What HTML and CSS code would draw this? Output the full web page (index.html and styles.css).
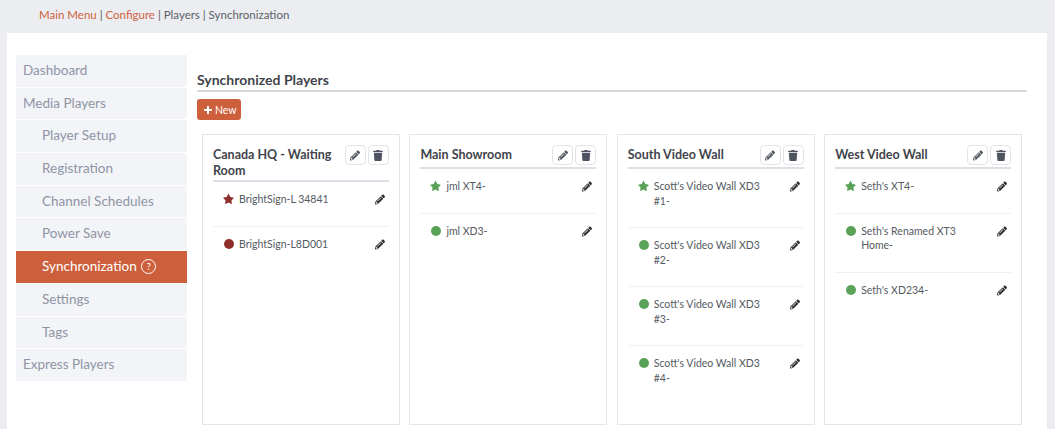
FILE: index.html
```html
<!DOCTYPE html>
<html lang="en">
<head>
    <meta charset="UTF-8">
    <title>Synchronization</title>
    <link rel="stylesheet" href="styles.css">
</head>
<body>
    <svg class="defs" width="0" height="0">
        <symbol id="i-pencil" viewBox="0 0 512 512"><path d="M497.9 142.1l-46.1 46.1c-4.7 4.7-12.3 4.7-17 0l-111-111c-4.7-4.7-4.7-12.3 0-17l46.1-46.1c18.7-18.7 49.1-18.7 67.9 0l60.1 60.1c18.8 18.7 18.8 49.1 0 67.9zM284.2 99.8L21.6 362.4.4 483.9c-2.9 16.4 11.4 30.6 27.8 27.8l121.5-21.3 262.6-262.6c4.7-4.7 4.7-12.3 0-17l-111-111c-4.8-4.7-12.4-4.7-17.1 0zM124.1 339.9c-5.5-5.5-5.5-14.3 0-19.8l154-154c5.5-5.5 14.3-5.5 19.8 0s5.5 14.3 0 19.8l-154 154c-5.5 5.5-14.3 5.5-19.8 0zM88 424h48v36.3l-64.5 11.3-31.1-31.1L51.7 376H88v48z"/></symbol>
        <symbol id="i-trash" viewBox="0 0 448 512"><path d="M432 32H312l-9.4-18.7A24 24 0 0 0 281.1 0H166.8a23.72 23.72 0 0 0-21.4 13.3L136 32H16A16 16 0 0 0 0 48v32a16 16 0 0 0 16 16h416a16 16 0 0 0 16-16V48a16 16 0 0 0-16-16zM53.2 467a48 48 0 0 0 47.9 45h245.8a48 48 0 0 0 47.9-45L416 128H32z"/></symbol>
        <symbol id="i-star" viewBox="0 0 576 512"><path d="M259.3 17.8L194 150.2 47.9 171.5c-26.2 3.8-36.7 36.1-17.7 54.6l105.7 103-25 145.5c-4.5 26.3 23.2 46 46.4 33.7L288 439.6l130.7 68.7c23.2 12.2 50.9-7.4 46.4-33.7l-25-145.5 105.7-103c19-18.5 8.5-50.8-17.7-54.6L382 150.2 316.7 17.8c-11.7-23.6-45.6-23.9-57.4 0z"/></symbol>
    </svg>

    <div class="breadcrumb">
        <a href="#">Main Menu</a> | <a href="#">Configure</a> | Players | Synchronization
    </div>

    <div class="panel">
        <ul class="sidenav">
            <li><a href="#">Dashboard</a></li>
            <li><a href="#">Media Players</a></li>
            <li class="sub"><a href="#">Player Setup</a></li>
            <li class="sub"><a href="#">Registration</a></li>
            <li class="sub"><a href="#">Channel Schedules</a></li>
            <li class="sub"><a href="#">Power Save</a></li>
            <li class="sub active"><a href="#">Synchronization <span class="help">?</span></a></li>
            <li class="sub"><a href="#">Settings</a></li>
            <li class="sub"><a href="#">Tags</a></li>
            <li><a href="#">Express Players</a></li>
        </ul>

        <div class="content">
            <h1 class="page-title">Synchronized Players</h1>
            <button class="btn-new"><svg class="plus" viewBox="0 0 10 10"><path d="M5 1v8M1 5h8"/></svg>New</button>

            <div class="groups">
                <div class="card">
                    <div class="card-head">
                        <h2>Canada HQ - Waiting Room</h2>
                        <div class="tools">
                            <button class="tool"><svg class="ico"><use href="#i-pencil"/></svg></button>
                            <button class="tool"><svg class="ico"><use href="#i-trash"/></svg></button>
                        </div>
                    </div>
                    <div class="player">
                        <svg class="star red"><use href="#i-star"/></svg>
                        <span class="name">BrightSign-L 34841</span>
                        <svg class="edit"><use href="#i-pencil"/></svg>
                    </div>
                    <div class="player">
                        <span class="dot red"></span>
                        <span class="name">BrightSign-L8D001</span>
                        <svg class="edit"><use href="#i-pencil"/></svg>
                    </div>
                </div>

                <div class="card">
                    <div class="card-head">
                        <h2>Main Showroom</h2>
                        <div class="tools">
                            <button class="tool"><svg class="ico"><use href="#i-pencil"/></svg></button>
                            <button class="tool"><svg class="ico"><use href="#i-trash"/></svg></button>
                        </div>
                    </div>
                    <div class="player">
                        <svg class="star green"><use href="#i-star"/></svg>
                        <span class="name">jml XT4-</span>
                        <svg class="edit"><use href="#i-pencil"/></svg>
                    </div>
                    <div class="player">
                        <span class="dot green"></span>
                        <span class="name">jml XD3-</span>
                        <svg class="edit"><use href="#i-pencil"/></svg>
                    </div>
                </div>

                <div class="card">
                    <div class="card-head">
                        <h2>South Video Wall</h2>
                        <div class="tools">
                            <button class="tool"><svg class="ico"><use href="#i-pencil"/></svg></button>
                            <button class="tool"><svg class="ico"><use href="#i-trash"/></svg></button>
                        </div>
                    </div>
                    <div class="player">
                        <svg class="star green"><use href="#i-star"/></svg>
                        <span class="name">Scott's Video Wall XD3 #1-</span>
                        <svg class="edit"><use href="#i-pencil"/></svg>
                    </div>
                    <div class="player">
                        <span class="dot green"></span>
                        <span class="name">Scott's Video Wall XD3 #2-</span>
                        <svg class="edit"><use href="#i-pencil"/></svg>
                    </div>
                    <div class="player">
                        <span class="dot green"></span>
                        <span class="name">Scott's Video Wall XD3 #3-</span>
                        <svg class="edit"><use href="#i-pencil"/></svg>
                    </div>
                    <div class="player">
                        <span class="dot green"></span>
                        <span class="name">Scott's Video Wall XD3 #4-</span>
                        <svg class="edit"><use href="#i-pencil"/></svg>
                    </div>
                </div>

                <div class="card">
                    <div class="card-head">
                        <h2>West Video Wall</h2>
                        <div class="tools">
                            <button class="tool"><svg class="ico"><use href="#i-pencil"/></svg></button>
                            <button class="tool"><svg class="ico"><use href="#i-trash"/></svg></button>
                        </div>
                    </div>
                    <div class="player">
                        <svg class="star green"><use href="#i-star"/></svg>
                        <span class="name">Seth's XT4-</span>
                        <svg class="edit"><use href="#i-pencil"/></svg>
                    </div>
                    <div class="player">
                        <span class="dot green"></span>
                        <span class="name">Seth's Renamed XT3 Home-</span>
                        <svg class="edit"><use href="#i-pencil"/></svg>
                    </div>
                    <div class="player">
                        <span class="dot green"></span>
                        <span class="name">Seth's XD234-</span>
                        <svg class="edit"><use href="#i-pencil"/></svg>
                    </div>
                </div>
            </div>
        </div>
    </div>
</body>
</html>
```

FILE: styles.css
```css
html, body {
    height: 100%;
}
body {
    font-family: 'Lato', 'Noto Sans', Arial, sans-serif;
    margin: 0;
    background-color: #ebedf0;
    color: #4a4f57;
    overflow: hidden;
}
.defs {
    position: absolute;
}
a {
    text-decoration: none;
    color: inherit;
}
.breadcrumb {
    height: 33px;
    box-sizing: border-box;
    padding: 7px 0 0 39px;
    font-size: 11.5px;
    line-height: 15px;
    color: #5b6068;
}
.breadcrumb a {
    color: #cf6240;
}
.panel {
    display: flex;
    gap: 10px;
    margin: 0 8px 0 7px;
    padding: 22px 20px 0 9px;
    height: 396px;
    box-sizing: border-box;
    background-color: #fff;
}
.sidenav {
    list-style: none;
    margin: 0;
    padding: 0;
    width: 171px;
    flex: none;
}
.sidenav li {
    height: 31.7px;
    margin-bottom: 1px;
    background-color: #f2f4f7;
    color: #8f95a6;
    font-size: 13.5px;
    line-height: 31.7px;
    padding-left: 7px;
}
.sidenav li.sub {
    padding-left: 26px;
}
.sidenav li.active {
    background-color: #cd5f3c;
    color: #fff;
}
.help {
    display: inline-block;
    width: 13px;
    height: 13px;
    margin-left: 1px;
    border: 1px solid #fff;
    border-radius: 50%;
    font-size: 10px;
    line-height: 13px;
    text-align: center;
    vertical-align: 1px;
}
.content {
    flex: 1;
    min-width: 0;
}
.page-title {
    margin: 16px 0 0;
    padding-bottom: 2px;
    font-size: 14px;
    line-height: 17px;
    font-weight: bold;
    color: #3f444b;
    border-bottom: 2px solid #d5d8dc;
}
.btn-new {
    display: flex;
    align-items: center;
    gap: 2px;
    height: 21px;
    width: 44px;
    margin-top: 7px;
    padding: 0 0 0 6px;
    border: none;
    border-radius: 3px;
    background-color: #cd5f3c;
    color: #fff;
    font-family: inherit;
    font-size: 10.5px;
}
.plus {
    width: 10px;
    height: 10px;
    fill: none;
    stroke: #fff;
    stroke-width: 2;
}
.groups {
    display: grid;
    grid-template-columns: repeat(4, 1fr);
    gap: 9.5px;
    margin: 14px 5px 0;
}
.card {
    height: 291px;
    box-sizing: border-box;
    padding: 9px 10px 0;
    border: 1px solid #e3e5e8;
}
.card-head {
    display: flex;
    justify-content: space-between;
    border-bottom: 2px solid #dcdfe5;
    padding-bottom: 1px;
    min-height: 22px;
}
.card-head h2 {
    margin: 3px 0 0;
    font-size: 12.5px;
    line-height: 16px;
    font-weight: bold;
    color: #3f444b;
}
.tools {
    display: flex;
    flex: none;
    gap: 2px;
    margin-top: 1px;
    margin-left: 10px;
}
.tool {
    display: flex;
    align-items: center;
    justify-content: center;
    width: 21px;
    height: 20px;
    padding: 0;
    border: 1px solid #e2e4e8;
    border-radius: 4px;
    background-color: #fff;
}
.ico {
    width: 10px;
    height: 11px;
    fill: #4e5560;
}
.player {
    display: flex;
    align-items: flex-start;
    padding: 10px 4px 19px 10px;
    border-bottom: 1px solid #eef0f2;
    font-size: 10.5px;
    line-height: 14.5px;
    color: #555a61;
}
.player:last-child {
    border-bottom: none;
}
.name {
    flex: 1;
    padding-right: 12px;
}
.star, .dot {
    flex: none;
    margin-right: 5px;
}
.star {
    width: 11px;
    height: 10px;
    margin-top: 2px;
}
.dot {
    width: 10px;
    height: 10px;
    margin-top: 2px;
    margin-left: 1px;
    border-radius: 50%;
}
.star.red {
    fill: #8f2f2c;
}
.star.green {
    fill: #5aa257;
}
.dot.red {
    background-color: #8f2f2c;
}
.dot.green {
    background-color: #5aa257;
}
.edit {
    flex: none;
    width: 10px;
    height: 11px;
    margin-top: 2px;
    fill: #2d2f33;
}
```
